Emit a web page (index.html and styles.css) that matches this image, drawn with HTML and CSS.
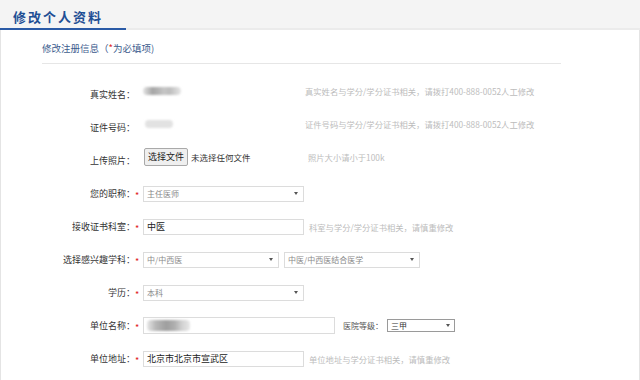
FILE: index.html
```html
<!DOCTYPE html>
<html lang="zh-CN">
<head>
  <meta charset="utf-8" />
  <meta name="viewport" content="width=device-width, initial-scale=1" />
  <title>修改个人资料</title>
  <link rel="stylesheet" href="styles.css">
</head>
<body>

<div class="tabbar">
  <div class="tab">修改个人资料</div>
</div>

<div class="panel">
  <div class="section-title">修改注册信息（<em>*</em>为必填项)</div>

  <div class="form">
    <div class="row static">
      <span class="label">真实姓名：</span><span class="star"></span>
      <div class="value"><span class="blur blur-name"></span></div>
      <span class="hint">真实姓名与学分/学分证书相关，请拨打400-888-0052人工修改</span>
    </div>

    <div class="row static">
      <span class="label">证件号码：</span><span class="star"></span>
      <div class="value"><span class="blur blur-id"></span></div>
      <span class="hint">证件号码与学分/学分证书相关，请拨打400-888-0052人工修改</span>
    </div>

    <div class="row static">
      <span class="label">上传照片：</span><span class="star"></span>
      <div class="value">
        <span class="file-btn">选择文件</span>
        <span class="file-name">未选择任何文件</span>
      </div>
      <span class="hint hint-photo">照片大小请小于100k</span>
    </div>

    <div class="row">
      <span class="label">您的职称：</span><span class="star">*</span>
      <div class="select w-full"><span>主任医师</span><i class="caret"></i></div>
    </div>

    <div class="row">
      <span class="label">接收证书科室：</span><span class="star">*</span>
      <div class="input w-full">中医</div>
      <span class="hint field-hint">科室与学分/学分证书相关，请慎重修改</span>
    </div>

    <div class="row">
      <span class="label">选择感兴趣学科：</span><span class="star">*</span>
      <div class="select w-half"><span>中/中西医</span><i class="caret"></i></div>
      <div class="select w-half second"><span>中医/中西医结合医学</span><i class="caret"></i></div>
    </div>

    <div class="row">
      <span class="label">学历：</span><span class="star">*</span>
      <div class="select w-full"><span>本科</span><i class="caret"></i></div>
    </div>

    <div class="row">
      <span class="label">单位名称：</span><span class="star">*</span>
      <div class="input w-wide"><span class="blur blur-unit"></span></div>
      <span class="sub-label">医院等级：</span>
      <div class="select small"><span>三甲</span><i class="caret"></i></div>
    </div>

    <div class="row">
      <span class="label">单位地址：</span><span class="star">*</span>
      <div class="input w-full">北京市北京市宣武区</div>
      <span class="hint field-hint">单位地址与学分证书相关，请慎重修改</span>
    </div>
  </div>
</div>

</body>
</html>
```

FILE: styles.css
```css
body {
  margin: 0;
  background-color: #ffffff;
  font-family: "Noto Sans CJK SC", "Liberation Sans", sans-serif;
  color: #333;
}

.tabbar {
  display: flex;
  height: 30px;
  background-color: #f4f4f4;
  box-shadow: inset 0 -2px #ebebeb;
}

.tab {
  width: 126px;
  box-sizing: border-box;
  padding: 7px 0 0 13px;
  font-size: 13px;
  font-weight: bold;
  letter-spacing: 2px;
  color: #1f4f94;
  box-shadow: inset 0 -2px #2a5aa6;
}

.panel {
  height: 350px;
  box-sizing: border-box;
  border-left: 1px solid #e4e4e4;
  border-right: 1px solid #e4e4e4;
  padding-top: 9px;
}

.section-title {
  margin-left: 41px;
  width: 519px;
  line-height: 19px;
  padding-bottom: 5px;
  border-bottom: 1px solid #e6e6e6;
  font-size: 9.5px;
  color: #3c5b8d;
}

.section-title em {
  font-style: normal;
  color: #e02020;
}

.form {
  margin-top: 14px;
}

.row {
  display: flex;
  align-items: center;
  height: 33px;
}

.label {
  width: 134px;
  text-align: right;
  font-size: 9px;
  color: #333;
  white-space: nowrap;
}

.star {
  width: 8px;
  padding-top: 3px;
  font-size: 9px;
  color: #e02020;
}

.value {
  width: 162px;
  display: flex;
  align-items: center;
}

.static .value,
.static .hint {
  margin-bottom: 8px;
}

.hint {
  font-size: 8.3px;
  color: #bcbcbc;
  white-space: nowrap;
}

.hint-photo {
  padding-left: 3px;
}

.field-hint {
  margin-left: 5px;
}

.blur {
  display: block;
  height: 8px;
  border-radius: 4px;
  filter: blur(0.8px);
}

.blur-name {
  width: 38px;
  background: linear-gradient(90deg, #e4e4e4, #a6a6a6 25%, #b4b4b4 40%, #c6c6c6 55%, #bdbdbd 70%, #e6e6e6);
}

.blur-id {
  width: 28px;
  margin-left: 2px;
  background-color: #e2e2e2;
}

.blur-unit {
  width: 43px;
  height: 11px;
  background: linear-gradient(90deg, #e6e6e6, #b8b8b8 20%, #9e9e9e 45%, #b0b0b0 65%, #d0d0d0 80%, #e8e8e8);
}

.file-btn {
  height: 18px;
  box-sizing: border-box;
  padding: 0 3px;
  margin-left: 1px;
  border: 1px solid #a9a9a9;
  border-radius: 2px;
  background-color: #efefef;
  font-size: 9px;
  line-height: 16px;
  color: #222;
}

.file-name {
  margin-left: 3px;
  font-size: 8.5px;
  color: #333;
}

.select,
.input {
  height: 16px;
  box-sizing: border-box;
  border: 1px solid #dcdcdc;
  background-color: #fff;
  display: flex;
  align-items: center;
}

.select {
  justify-content: space-between;
  padding: 0 5px 0 3px;
  font-size: 8px;
  color: #8a8a8a;
}

.input {
  padding: 0 3px;
  font-size: 9px;
  color: #222;
}

.caret {
  width: 0;
  height: 0;
  border-left: 2.5px solid transparent;
  border-right: 2.5px solid transparent;
  border-top: 3px solid #555;
}

.w-full {
  width: 161px;
}

.w-half {
  width: 136px;
}

.select.second {
  margin-left: 5px;
}

.w-wide {
  width: 192px;
  height: 17px;
}

.sub-label {
  margin-left: 8px;
  width: 44px;
  font-size: 8px;
  color: #555;
}

.select.small {
  width: 68px;
  height: 13px;
  border-color: #9a9a9a;
  color: #333;
  padding: 0 4px 0 3px;
}
```
